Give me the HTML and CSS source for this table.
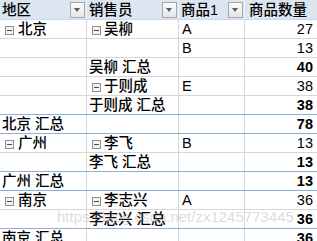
FILE: index.html
```html
<!DOCTYPE html>
<html lang="zh">
<head>
<meta charset="utf-8">
<link rel="stylesheet" href="styles.css">
</head>
<body>
<div class="sheet">
  <div class="row head">
    <div class="c"><span class="zh">地区</span><span class="dd"></span></div>
    <div class="c"><span class="zh">销售员</span><span class="dd"></span></div>
    <div class="c"><span class="zh">商品1</span><span class="dd"></span></div>
    <div class="c last"><span class="zh">商品数量</span></div>
  </div>
  <div class="row">
    <div class="c zh"><span class="box"></span>北京</div>
    <div class="c zh"><span class="box"></span>吴柳</div>
    <div class="c lat">A</div>
    <div class="c num last">27</div>
  </div>
  <div class="row">
    <div class="c"></div>
    <div class="c"></div>
    <div class="c lat">B</div>
    <div class="c num last">13</div>
  </div>
  <div class="row">
    <div class="c"></div>
    <div class="c zh">吴柳 汇总</div>
    <div class="c"></div>
    <div class="c num bold last">40</div>
  </div>
  <div class="row">
    <div class="c"></div>
    <div class="c zh"><span class="box"></span>于则成</div>
    <div class="c lat">E</div>
    <div class="c num last">38</div>
  </div>
  <div class="row">
    <div class="c"></div>
    <div class="c zh">于则成 汇总</div>
    <div class="c"></div>
    <div class="c num bold last">38</div>
  </div>
  <div class="row total">
    <div class="c zh">北京 汇总</div>
    <div class="c"></div>
    <div class="c"></div>
    <div class="c num bold last">78</div>
  </div>
  <div class="row">
    <div class="c zh"><span class="box"></span>广州</div>
    <div class="c zh"><span class="box"></span>李飞</div>
    <div class="c lat">B</div>
    <div class="c num last">13</div>
  </div>
  <div class="row">
    <div class="c"></div>
    <div class="c zh">李飞 汇总</div>
    <div class="c"></div>
    <div class="c num bold last">13</div>
  </div>
  <div class="row total">
    <div class="c zh">广州 汇总</div>
    <div class="c"></div>
    <div class="c"></div>
    <div class="c num bold last">13</div>
  </div>
  <div class="row">
    <div class="c zh"><span class="box"></span>南京</div>
    <div class="c zh"><span class="box"></span>李志兴</div>
    <div class="c lat">A</div>
    <div class="c num last">36</div>
  </div>
  <div class="row">
    <div class="c"></div>
    <div class="c zh">李志兴 汇总</div>
    <div class="c"></div>
    <div class="c num bold last">36</div>
  </div>
  <div class="row total">
    <div class="c zh">南京 汇总</div>
    <div class="c"></div>
    <div class="c"></div>
    <div class="c num bold last">36</div>
  </div>
  <div class="watermark">https://blog.csdn.net/zx1245773445</div>
</div>
</body>
</html>
```

FILE: styles.css
```css
html, body {
  margin: 0;
  padding: 0;
  background: #fff;
}
body {
  width: 317px;
  height: 241px;
  overflow: hidden;
  font-family: "Liberation Sans", "Noto Sans CJK SC", sans-serif;
  font-size: 14.5px;
  color: #000;
}
.sheet {
  position: relative;
  width: 317px;
}
.row {
  display: grid;
  grid-template-columns: 87px 92px 66px 1fr;
  height: 19px;
  box-sizing: border-box;
  border-bottom: 1px solid #d6d6d6;
}
.row.head {
  height: 20px;
  background: #dce6f1;
  border-bottom: 1px solid #c9d7e8;
}
.row.total {
  border-bottom: 1px solid #8db0d8;
  box-shadow: 0 -1px 0 #8db0d8;
}
.c {
  display: flex;
  align-items: center;
  box-sizing: border-box;
  border-right: 1px solid #d6d6d6;
  padding-left: 2px;
  white-space: nowrap;
  overflow: hidden;
  line-height: 18px;
}
.zh {
  font-weight: 500;
  color: #000;
}
.head .c {
  justify-content: space-between;
  border-right-color: #eef3f9;
  padding-right: 1px;
}
.c.last {
  border-right: none;
}
.head .c.last {
  padding-left: 4px;
}
.c.lat {
  padding-left: 3px;
}
.c.num {
  justify-content: flex-end;
  padding-right: 4px;
}
.bold {
  font-weight: bold;
}
.dd {
  position: relative;
  width: 15px;
  height: 16px;
  box-sizing: border-box;
  border: 1px solid #a8a8a8;
  background: linear-gradient(#fafafa, #e6e6e6);
  flex: none;
}
.dd::after {
  content: "";
  position: absolute;
  left: 3px;
  top: 5px;
  border-left: 3.5px solid transparent;
  border-right: 3.5px solid transparent;
  border-top: 4px solid #5a5a5a;
}
.box {
  position: relative;
  width: 9px;
  height: 9px;
  box-sizing: border-box;
  border: 1px solid #8f8f8f;
  background: #f3f3f3;
  margin: 2px 3px 0 3px;
  flex: none;
}
.c:first-child .box {
  margin-left: 3px;
  margin-right: 4px;
}
.box::after {
  content: "";
  position: absolute;
  left: 1px;
  top: 3px;
  width: 5px;
  height: 1px;
  background: #4a4a4a;
}
.watermark {
  position: absolute;
  left: 57px;
  top: 208px;
  font-family: "Liberation Sans", sans-serif;
  font-size: 15px;
  line-height: 18px;
  color: rgba(150, 150, 150, 0.35);
  white-space: nowrap;
  pointer-events: none;
}
```
